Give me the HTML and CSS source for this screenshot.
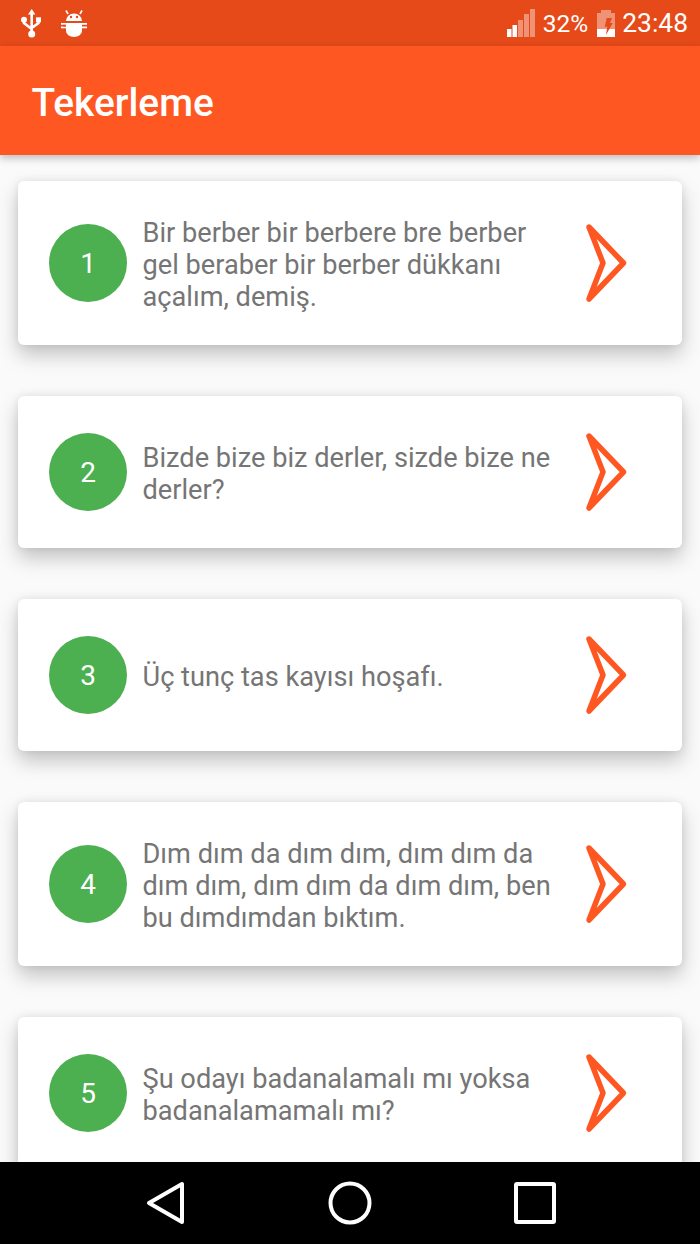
FILE: index.html
```html
<!DOCTYPE html>
<html lang="tr">

<head>
    <meta charset="UTF-8">
    <meta name="viewport" content="width=device-width, initial-scale=1.0">
    <title>Tekerleme</title>
    <link rel="stylesheet" href="styles.css">
</head>

<body>
    <div class="status-bar">
        <div class="status-left">
            <svg width="24" height="32" viewBox="0 0 24 32">
                <path class="usb-line" d="M11.700 6v21M4 13v3l7.700 6M18.500 14v2l-6.800 5" />
                <path class="usb-fill" d="M11.700 2l3.700 5.500H8z" />
                <circle class="usb-fill" cx="11.700" cy="27" r="3.500" />
                <circle class="usb-fill" cx="4" cy="12.700" r="3" />
                <rect class="usb-fill" x="16" y="10.300" width="5" height="5" />
            </svg>
            <svg width="26" height="32" viewBox="0 0 26 32">
                <path class="usb-line thin" d="M7 7 5 3.500M19 7l2-3.500" />
                <path class="usb-fill" d="M5 14a8 7.500 0 0 1 16 0z" />
                <path class="usb-fill" d="M5 16h16v8a8 6 0 0 1-16 0z" />
                <rect class="usb-fill" x="0" y="16" width="26" height="1.800" />
                <rect class="usb-fill" x="0" y="19.500" width="26" height="1.800" />
                <rect class="android-eye" x="2" y="17.800" width="3" height="1.700" />
                <circle class="android-eye" cx="10" cy="10" r="1.200" />
                <circle class="android-eye" cx="16" cy="10" r="1.200" />
            </svg>
        </div>
        <div class="status-right">
            <svg class="signal" width="28" height="28" viewBox="0 0 28 28">
                <rect class="bar-on" x="0" y="20" width="4.500" height="8" />
                <rect class="bar-on" x="5.500" y="16" width="4.500" height="12" />
                <rect class="bar-off" x="11" y="11" width="5" height="17" />
                <rect class="bar-off" x="17" y="5" width="5" height="23" />
                <rect class="bar-off" x="23" y="0" width="5" height="28" />
            </svg>
            <span class="status-percent">32%</span>
            <svg class="battery" width="18" height="27" viewBox="0 0 18 27">
                <path class="bar-off" d="M4 0h10v3h4v24H0V3h4z" />
                <rect class="bar-on" x="0" y="19" width="18" height="8" />
                <path class="bolt" d="M9.700 8H15l-2 5h2.700L9 25l1.300-8.300H7.700z" />
            </svg>
            <span class="status-clock">23:48</span>
        </div>
    </div>

    <div class="toolbar">Tekerleme</div>

    <div class="list">
        <div class="card">
            <div class="num">1</div>
            <div class="text text-long">Bir berber bir berbere bre berber gel beraber bir berber dükkanı açalım, demiş.</div>
            <svg class="arrow" width="44" height="78" viewBox="0 0 44 78">
                <path d="M4 3 38.500 39 4 75 18 39z" />
            </svg>
        </div>
        <div class="card">
            <div class="num">2</div>
            <div class="text">Bizde bize biz derler, sizde bize ne derler?</div>
            <svg class="arrow" width="44" height="78" viewBox="0 0 44 78">
                <path d="M4 3 38.500 39 4 75 18 39z" />
            </svg>
        </div>
        <div class="card">
            <div class="num">3</div>
            <div class="text">Üç tunç tas kayısı hoşafı.</div>
            <svg class="arrow" width="44" height="78" viewBox="0 0 44 78">
                <path d="M4 3 38.500 39 4 75 18 39z" />
            </svg>
        </div>
        <div class="card">
            <div class="num">4</div>
            <div class="text text-long">Dım dım da dım dım, dım dım da dım dım, dım dım da dım dım, ben bu dımdımdan bıktım.</div>
            <svg class="arrow" width="44" height="78" viewBox="0 0 44 78">
                <path d="M4 3 38.500 39 4 75 18 39z" />
            </svg>
        </div>
        <div class="card">
            <div class="num">5</div>
            <div class="text">Şu odayı badanalamalı mı yoksa badanalamamalı mı?</div>
            <svg class="arrow" width="44" height="78" viewBox="0 0 44 78">
                <path d="M4 3 38.500 39 4 75 18 39z" />
            </svg>
        </div>
    </div>

    <div class="nav-bar">
        <svg width="40" height="44" viewBox="0 0 40 44">
            <path d="M36 3v38L3 22z" />
        </svg>
        <svg width="44" height="44" viewBox="0 0 44 44">
            <circle cx="22" cy="22" r="19.500" />
        </svg>
        <svg width="44" height="44" viewBox="0 0 44 44">
            <rect x="3" y="3" width="38" height="38" rx="1" />
        </svg>
    </div>
</body>

</html>
```

FILE: styles.css
```css
* {
    box-sizing: border-box;
}

html,
body {
    margin: 0;
    padding: 0;
}

body {
    width: 700px;
    height: 1244px;
    display: flex;
    flex-direction: column;
    overflow: hidden;
    background-color: #fafafa;
    font-family: Roboto, "Liberation Sans", sans-serif;
}

.status-bar {
    height: 46px;
    flex: none;
    display: flex;
    justify-content: space-between;
    align-items: center;
    padding: 0 12px 0 20px;
    background-color: #e64a19;
}

.status-left,
.status-right {
    display: flex;
    align-items: center;
}

.status-left {
    gap: 17px;
}

.status-percent,
.status-clock {
    color: #fff;
    font-size: 24.500px;
}

.status-percent {
    margin-left: 8px;
}

.status-clock {
    margin-left: 7px;
    font-size: 26.400px;
}

.battery {
    margin-left: 9px;
}

.usb-line {
    fill: none;
    stroke: #fff;
    stroke-width: 2.600;
}

.usb-line.thin {
    stroke-width: 1.600;
}

.usb-fill {
    fill: #fff;
}

.android-eye {
    fill: #e64a19;
}

.bar-on {
    fill: #fff;
}

.bar-off {
    fill: #fff;
    opacity: .4;
}

.bolt {
    fill: #e64a19;
}

.toolbar {
    height: 109px;
    flex: none;
    display: flex;
    align-items: center;
    padding: 4px 0 0 31.500px;
    background-color: #ff5722;
    color: #fff;
    font-size: 38.800px;
    font-weight: 500;
    box-shadow: 0 3px 8px rgba(0, 0, 0, .25);
    position: relative;
    z-index: 1;
}

.list {
    flex: 1;
    min-height: 0;
    overflow: hidden;
    padding: 26px 18px 0;
    display: flex;
    flex-direction: column;
    gap: 51px;
}

.card {
    flex: none;
    display: flex;
    align-items: center;
    padding: 37px 53px 37px 31px;
    background-color: #fff;
    border-radius: 6px;
    box-shadow: 0 10px 20px rgba(0, 0, 0, .22), 0 0 8px rgba(0, 0, 0, .08);
}

.num {
    width: 78px;
    height: 78px;
    flex: none;
    display: flex;
    justify-content: center;
    align-items: center;
    border-radius: 50%;
    background-color: #4caf50;
    color: #fff;
    font-size: 28px;
}

.text {
    flex: 1;
    margin: 4px 20px 0 15.500px;
    color: #757575;
    font-size: 27.200px;
    line-height: 32px;
}

.text-long {
    margin-top: -1px;
    margin-bottom: -5px;
}

.arrow {
    flex: none;
    overflow: visible;
}

.arrow path {
    fill: none;
    stroke: #ff5722;
    stroke-width: 5.500;
    stroke-linejoin: round;
}

.nav-bar {
    height: 82px;
    flex: none;
    display: flex;
    justify-content: space-between;
    align-items: center;
    padding: 0 143px 0 146px;
    background-color: #000;
    position: relative;
    z-index: 1;
}

.nav-bar svg * {
    fill: none;
    stroke: #fff;
    stroke-width: 4;
    stroke-linejoin: round;
}
```
